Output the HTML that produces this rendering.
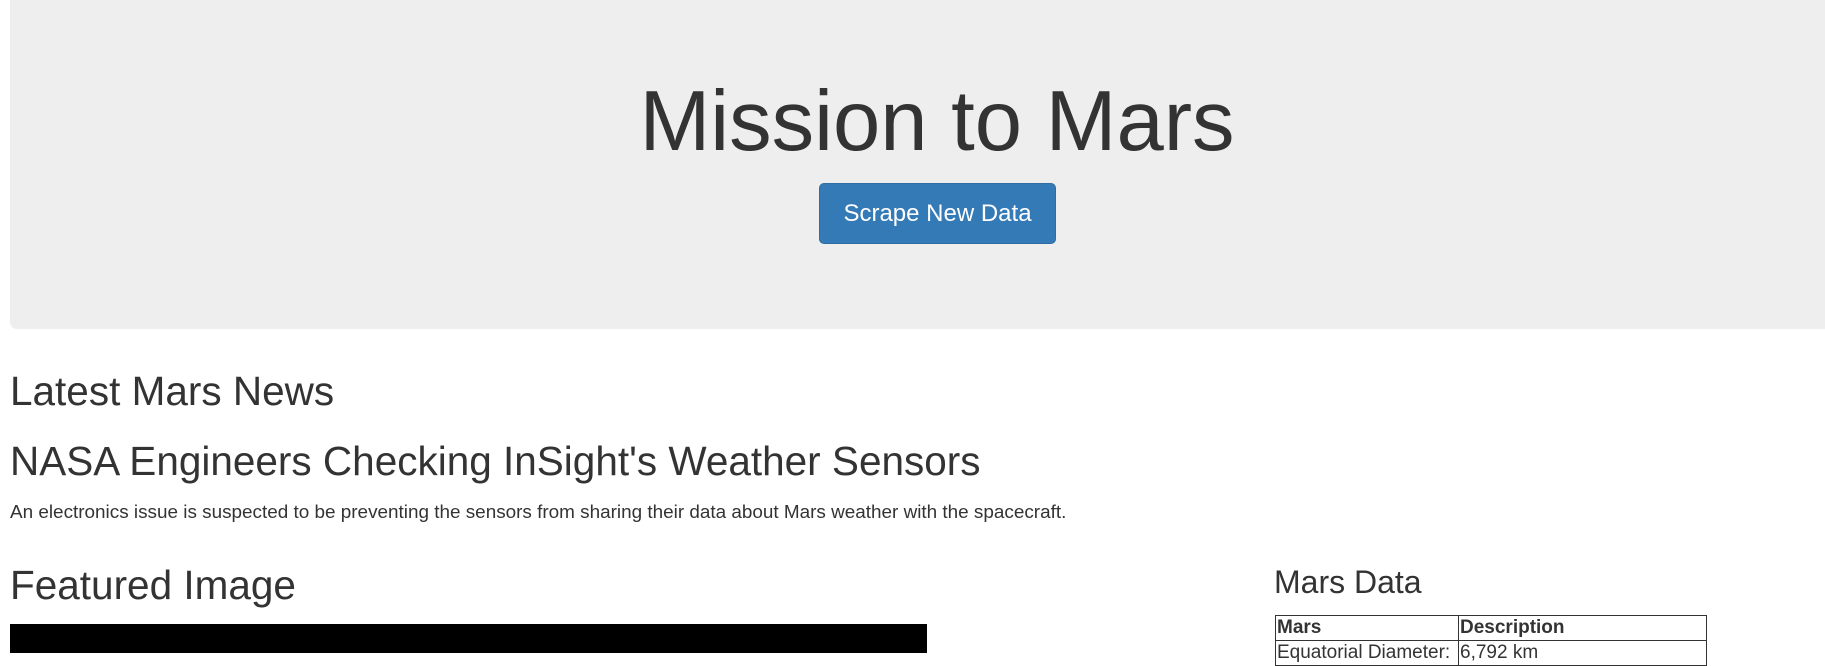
<!DOCTYPE html>
<html><head><style>
body{margin:0;width:1825px;height:653px;overflow:hidden;font-family:"Liberation Sans",Arial,sans-serif;color:#333;background:#fff;position:relative}
.j{position:absolute;left:10px;top:0;width:1815px;height:329px;background:#eee;border-radius:0 0 0 7px}
h1{position:absolute;margin:0;font-weight:400;left:0;width:1874px;text-align:center;top:67px;font-size:85px;line-height:110px}
.btn{position:absolute;left:819px;top:183px;width:237px;height:61px;background:#337ab7;border:1px solid #2e6da4;border-radius:5px;box-sizing:border-box;color:#fff;font-size:24px;line-height:59px;text-align:center}
.t{position:absolute;margin:0;font-weight:400;white-space:nowrap}
table{position:absolute;left:1275px;top:615px;width:432px;border-collapse:collapse;font-size:19px}
td,th{border:1px solid #333;text-align:left;padding:0 1px;height:24px;line-height:24px}
</style></head><body>
<div class="j"></div>
<h1>Mission to Mars</h1>
<div class="btn">Scrape New Data</div>
<div class="t" style="left:10px;top:366px;font-size:40.5px;line-height:50px">Latest Mars News</div>
<div class="t" style="left:10px;top:436px;font-size:40.5px;line-height:50px">NASA Engineers Checking InSight's Weather Sensors</div>
<div class="t" style="left:10px;top:501px;font-size:18.9px;line-height:24px">An electronics issue is suspected to be preventing the sensors from sharing their data about Mars weather with the spacecraft.</div>
<div class="t" style="left:10px;top:560px;font-size:40.5px;line-height:50px">Featured Image</div>
<div style="position:absolute;left:10px;top:624px;width:917px;height:29px;background:#000"></div>
<div class="t" style="left:1274px;top:561px;font-size:32px;line-height:42px">Mars Data</div>
<table><tr><th style="width:180px">Mars</th><th>Description</th></tr><tr><td>Equatorial Diameter:</td><td>6,792 km</td></tr></table>
</body></html>
